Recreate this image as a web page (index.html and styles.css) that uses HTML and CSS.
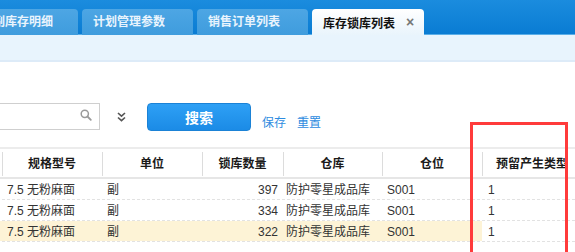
FILE: index.html
```html
<!DOCTYPE html>
<html lang="zh">
<head>
<meta charset="utf-8">
<link rel="stylesheet" href="styles.css">
</head>
<body>
<div class="page">
  <div class="tabbar">
    <div class="tab">副库存明细</div>
    <div class="tab">计划管理参数</div>
    <div class="tab">销售订单列表</div>
    <div class="tab active">库存锁库列表<span class="close">×</span></div>
  </div>
  <div class="strip"></div>

  <div class="search-row">
    <div class="input">
      <svg class="mag" width="12" height="12" viewBox="0 0 12 12"><circle cx="4.8" cy="4.8" r="3.6" fill="none" stroke="#9a9a9a" stroke-width="1.5"/><path d="M7.5 7.5 L10.8 10.8" stroke="#9a9a9a" stroke-width="1.8" stroke-linecap="round"/></svg>
    </div>
    <svg class="chev" width="9" height="10" viewBox="0 0 9 10"><path d="M1 1 L4.5 4.2 L8 1 M1 5.5 L4.5 8.7 L8 5.5" fill="none" stroke="#555" stroke-width="1.6"/></svg>
    <button class="btn">搜索</button>
    <a class="link">保存</a>
    <a class="link">重置</a>
  </div>

  <div class="table">
    <div class="row head">
      <div></div>
      <div class="th">规格型号</div>
      <div class="th">单位</div>
      <div class="th">锁库数量</div>
      <div class="th">仓库</div>
      <div class="th">仓位</div>
      <div class="th">预留产生类型</div>
    </div>
    <div class="row">
      <div></div><div>7.5 无粉麻面</div><div>副</div><div class="num">397</div><div class="wh">防护零星成品库</div><div>S001</div><div class="last">1</div>
    </div>
    <div class="row">
      <div></div><div>7.5 无粉麻面</div><div>副</div><div class="num">334</div><div class="wh">防护零星成品库</div><div>S001</div><div class="last">1</div>
    </div>
    <div class="row sel">
      <div></div><div>7.5 无粉麻面</div><div>副</div><div class="num">322</div><div class="wh">防护零星成品库</div><div>S001</div><div class="last">1</div>
    </div>
  </div>

  <div class="mark"></div>
</div>
</body>
</html>
```

FILE: styles.css
```css
html, body {
  margin: 0;
  padding: 0;
  background: #fff;
  overflow: hidden;
}
body {
  font-family: "Liberation Sans", "Noto Sans CJK SC", sans-serif;
  font-size: 12px;
  color: #333;
}
.page {
  position: relative;
  width: 575px;
  height: 252px;
  overflow: hidden;
}

/* tabs */
.tabbar {
  height: 35px;
  box-sizing: border-box;
  padding-top: 9px;
  background: linear-gradient(#1b8cde, #0a7cd3);
  display: flex;
  gap: 4px;
  margin-left: -33px;
  border-bottom: 1px solid #5aaee8;
}
.tab {
  width: 111px;
  height: 26px;
  box-sizing: border-box;
  padding-left: 11px;
  line-height: 27px;
  border-radius: 4px 4px 0 0;
  background: linear-gradient(#4da6e4, #3f9cdd);
  color: #e9f4fd;
  font-weight: bold;
  white-space: nowrap;
}
.tab:first-child {
  padding-left: 26px;
}
.tab.active {
  width: 112px;
  background: linear-gradient(#ffffff, #e9f4fc);
  color: #111;
  display: flex;
  align-items: center;
  line-height: normal;
}
.close {
  margin-left: 11px;
  color: #777;
  font-size: 14px;
  font-weight: bold;
}
.strip {
  height: 25px;
  background: #e8f4fd;
  border-bottom: 2px solid #ddebf8;
}

/* search row */
.search-row {
  margin-top: 41px;
  height: 28px;
  display: flex;
  align-items: flex-start;
}
.input {
  width: 120px;
  height: 27px;
  box-sizing: border-box;
  margin-left: -20px;
  border: 1px solid #cfcfcf;
  background: #fff;
  display: flex;
  align-items: center;
  justify-content: flex-end;
  padding-right: 7px;
}
.mag {
  margin-top: -3px;
}
.chev {
  margin: 9px 0 0 17px;
}
.btn {
  margin-left: 21px;
  width: 104px;
  height: 28px;
  border: 1px solid #1b82d6;
  border-radius: 4px;
  background: linear-gradient(#2ea0f5, #1b8be6);
  color: #fff;
  font-family: "Noto Sans CJK SC", sans-serif;
  font-size: 14px;
  font-weight: bold;
  padding: 0;
  line-height: 24px;
}
.link {
  margin-top: 12px;
  margin-left: 11px;
  color: #2d8be0;
  line-height: 16px;
  font-size: 12px;
}

/* table */
.table {
  margin-top: 16px;
  margin-left: -38px;
}
.row {
  display: grid;
  grid-template-columns: 40px 100px 100px 81px 99px 100px 100px;
  height: 21px;
  box-sizing: border-box;
  border-bottom: 1px dashed #e2e2e2;
}
.row > div {
  padding: 3px 5px 0;
  line-height: 17px;
  white-space: nowrap;
  overflow: hidden;
}
.row.head {
  height: 32px;
  border-top: 2px solid #ececec;
  border-bottom: 2px solid #e6e6e6;
}
.row.head > div {
  padding: 0;
  line-height: 31px;
}
.th {
  text-align: center;
  font-weight: bold;
  color: #1a1a1a;
  background: linear-gradient(#dcdcdc, #dcdcdc) no-repeat 0 3px / 1px 24px;
}
.row.head > .th:last-child {
  overflow: visible;
}
.num {
  text-align: right;
}
.row > .wh {
  padding-left: 3px;
}
.row > .last {
  padding-left: 6px;
}
.row.sel > div {
  background: #fdf3d6;
}
.row.sel > .last {
  background: #fff;
}

/* annotation */
.mark {
  position: absolute;
  left: 470px;
  top: 122px;
  width: 92px;
  height: 200px;
  border: 3px solid #ff3b3b;
}
```
